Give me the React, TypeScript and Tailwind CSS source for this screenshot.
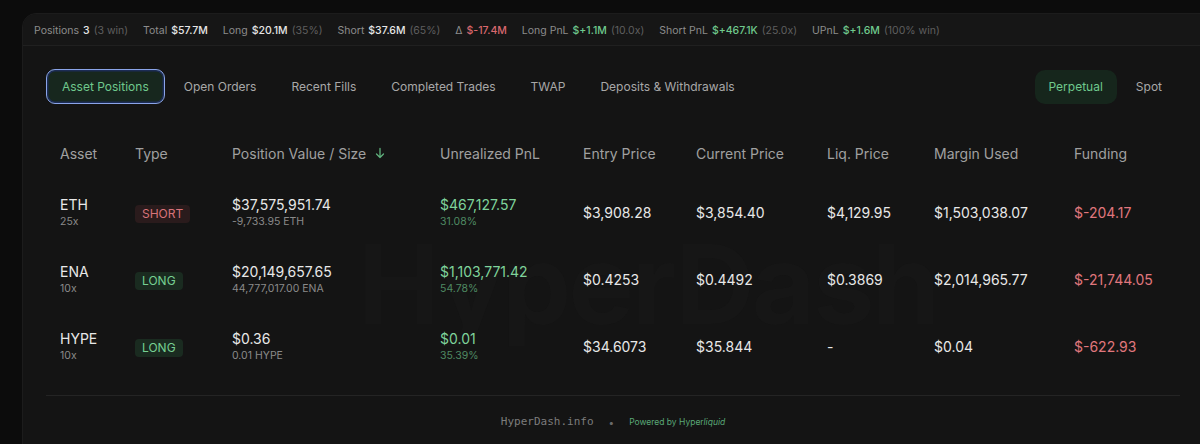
import React from "react";

const font = { fontFamily: "Inter, 'Noto Sans', sans-serif" };

type Row = {
  asset: string;
  lev: string;
  type: "SHORT" | "LONG";
  value: string;
  size: string;
  upnl: string;
  pct: string;
  entry: string;
  current: string;
  liq: string;
  margin: string;
  funding: string;
};

const rows: Row[] = [
  { asset: "ETH", lev: "25x", type: "SHORT", value: "$37,575,951.74", size: "-9,733.95 ETH", upnl: "$467,127.57", pct: "31.08%", entry: "$3,908.28", current: "$3,854.40", liq: "$4,129.95", margin: "$1,503,038.07", funding: "$-204.17" },
  { asset: "ENA", lev: "10x", type: "LONG", value: "$20,149,657.65", size: "44,777,017.00 ENA", upnl: "$1,103,771.42", pct: "54.78%", entry: "$0.4253", current: "$0.4492", liq: "$0.3869", margin: "$2,014,965.77", funding: "$-21,744.05" },
  { asset: "HYPE", lev: "10x", type: "LONG", value: "$0.36", size: "0.01 HYPE", upnl: "$0.01", pct: "35.39%", entry: "$34.6073", current: "$35.844", liq: "-", margin: "$0.04", funding: "$-622.93" },
];

function Stat({ label, value, extra, valueClass = "text-[#e6e6e6]" }: { label: string; value: string; extra?: string; valueClass?: string }) {
  return (
    <div className="flex items-center gap-[4px]">
      <span className="text-[#8c8c8c]">{label}</span>
      <span className={`font-medium ${valueClass}`}>{value}</span>
      {extra && <span className="text-[#5f5f5f]">{extra}</span>}
    </div>
  );
}

export default function App() {
  return (
    <div className="w-[1200px] h-[444px] overflow-hidden bg-[#0c0c0c] pl-[22px] pt-[13px]" style={font}>
      <div className="relative w-[1182px] h-[460px] rounded-tl-[14px] bg-[#141414] border border-[#1c1c1c] overflow-hidden">
        {/* faint watermark */}
        <div className="pointer-events-none absolute left-[335px] top-[215px] text-[110px] font-bold leading-none tracking-tight text-[#161616] select-none">
          HyperDash
        </div>

        {/* stats bar */}
        <div className="relative flex h-[32px] items-center gap-[15px] border-b border-[#202020] bg-[#161616] pl-[11px] pt-[2px] text-[10.5px]">
          <Stat label="Positions" value="3" extra="(3 win)" />
          <Stat label="Total" value="$57.7M" />
          <Stat label="Long" value="$20.1M" extra="(35%)" />
          <Stat label="Short" value="$37.6M" extra="(65%)" />
          <Stat label="Δ" value="$-17.4M" valueClass="text-[#d9686e]" />
          <Stat label="Long PnL" value="$+1.1M" extra="(10.0x)" valueClass="text-[#6fc98d]" />
          <Stat label="Short PnL" value="$+467.1K" extra="(25.0x)" valueClass="text-[#6fc98d]" />
          <Stat label="UPnL" value="$+1.6M" extra="(100% win)" valueClass="text-[#6fc98d]" />
        </div>

        <div className="relative px-[23px]">
          {/* tabs */}
          <div className="flex items-center justify-between pt-[23px]">
            <div className="flex items-center text-[12px] text-[#a8a8a8]">
              <div className="flex h-[35px] items-center rounded-[9px] border-[1.5px] border-[#8aa4e8] bg-[#17271e] px-[15px] text-[#6fc98d] shadow-[inset_0_0_0_1.5px_#1c2c55]">
                Asset Positions
              </div>
              <div className="ml-[19px]">Open Orders</div>
              <div className="ml-[35px]">Recent Fills</div>
              <div className="ml-[35px]">Completed Trades</div>
              <div className="ml-[35px]">TWAP</div>
              <div className="ml-[35px]">Deposits &amp; Withdrawals</div>
            </div>
            <div className="flex items-center text-[12px]">
              <div className="flex h-[34px] items-center rounded-[10px] bg-[#16261c] px-[14px] text-[#6fc98d]">Perpetual</div>
              <div className="ml-[19px] mr-[18px] text-[#a8a8a8]">Spot</div>
            </div>
          </div>

          {/* table */}
          <div className="mt-[35px] px-[14px]">
            <div className="flex h-[28px] items-center text-[14px] text-[#a0a0a0]">
              <div className="w-[75px]">Asset</div>
              <div className="w-[97px]">Type</div>
              <div className="flex w-[208px] items-center gap-[8px]">
                Position Value / Size
                <svg width="12" height="12" viewBox="0 0 12 12" fill="none" stroke="#5fb07c" strokeWidth="1.3" strokeLinecap="round" strokeLinejoin="round">
                  <path d="M6 1.5v9M2.5 7l3.5 3.5L9.5 7" />
                </svg>
              </div>
              <div className="w-[143px]">Unrealized PnL</div>
              <div className="w-[113px]">Entry Price</div>
              <div className="w-[131px]">Current Price</div>
              <div className="w-[107px]">Liq. Price</div>
              <div className="w-[140px]">Margin Used</div>
              <div className="flex-1">Funding</div>
            </div>

            <div className="mt-[12px]">
              {rows.map((r) => (
                <div key={r.asset} className="flex h-[67px] items-center text-[14px] text-[#e8e8e8]">
                  <div className="flex w-[75px] flex-col">
                    <span className="leading-[19px]">{r.asset}</span>
                    <span className="text-[10.5px] leading-[16px] text-[#8a8a8a]">{r.lev}</span>
                  </div>
                  <div className="w-[97px]">
                    {r.type === "SHORT" ? (
                      <span className="inline-flex h-[18px] items-center rounded-[4px] bg-[#2a1b1c] px-[7px] text-[12px] text-[#d8737a]">SHORT</span>
                    ) : (
                      <span className="inline-flex h-[18px] items-center rounded-[4px] bg-[#1a2b20] px-[7px] text-[12px] text-[#76d092]">LONG</span>
                    )}
                  </div>
                  <div className="flex w-[208px] flex-col">
                    <span className="leading-[19px]">{r.value}</span>
                    <span className="text-[10.5px] leading-[16px] text-[#8a8a8a]">{r.size}</span>
                  </div>
                  <div className="flex w-[143px] flex-col">
                    <span className="leading-[19px] text-[#7fd39b]">{r.upnl}</span>
                    <span className="text-[10.5px] leading-[16px] text-[#4f8a63]">{r.pct}</span>
                  </div>
                  <div className="w-[113px]">{r.entry}</div>
                  <div className="w-[131px]">{r.current}</div>
                  <div className="w-[107px]">{r.liq}</div>
                  <div className="w-[140px]">{r.margin}</div>
                  <div className="flex-1 text-[#e0777d]">{r.funding}</div>
                </div>
              ))}
            </div>
          </div>

          {/* divider */}
          <div className="mt-[15px] h-px bg-[#242424]" />

          {/* footer */}
          <div className="flex h-[52px] items-center justify-center gap-[15px]">
            <span className="text-[11px] text-[#7c7c7c]" style={{ fontFamily: "'DejaVu Sans Mono', 'Liberation Mono', monospace" }}>
              HyperDash.info
            </span>
            <span className="text-[10px] text-[#6a6a6a]">•</span>
            <span className="text-[8.5px] text-[#5aa877]">
              Powered by Hyper<span className="italic">liquid</span>
            </span>
          </div>
        </div>
      </div>
    </div>
  );
}
